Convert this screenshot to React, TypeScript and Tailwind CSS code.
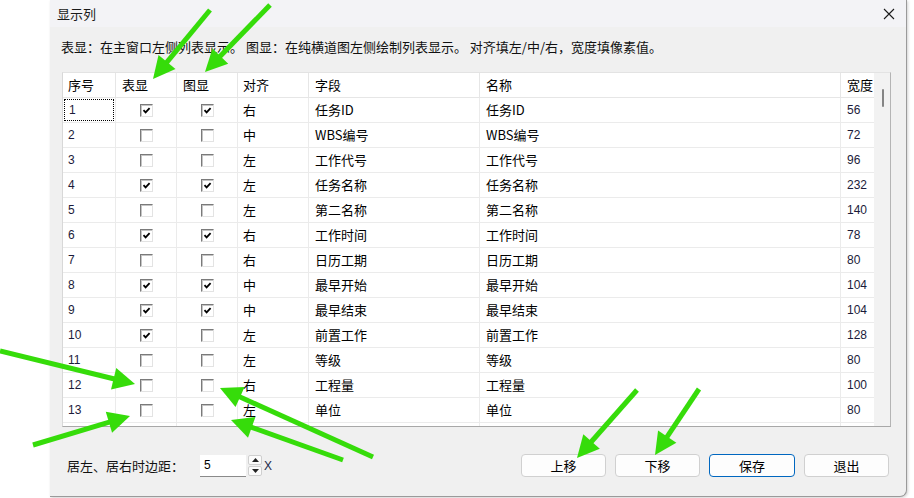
import React from "react";

type Row = [number, boolean, boolean, string, string, string, string];

const rows: Row[] = [
  [1, true, true, "右", "任务ID", "任务ID", "56"],
  [2, false, false, "中", "WBS编号", "WBS编号", "72"],
  [3, false, false, "左", "工作代号", "工作代号", "96"],
  [4, true, true, "左", "任务名称", "任务名称", "232"],
  [5, false, false, "左", "第二名称", "第二名称", "140"],
  [6, true, true, "右", "工作时间", "工作时间", "78"],
  [7, false, false, "右", "日历工期", "日历工期", "80"],
  [8, true, true, "中", "最早开始", "最早开始", "104"],
  [9, true, true, "中", "最早结束", "最早结束", "104"],
  [10, true, false, "左", "前置工作", "前置工作", "128"],
  [11, false, false, "左", "等级", "等级", "80"],
  [12, false, false, "右", "工程量", "工程量", "100"],
  [13, false, false, "左", "单位", "单位", "80"],
  [14, false, false, "中", "材料", "材料", "80"],
];

function Check({ on }: { on: boolean }) {
  return (
    <div className="w-[13px] h-[13px] bg-white border border-t-[#7a7a7a] border-l-[#7a7a7a] border-b-[#e3e3e3] border-r-[#e3e3e3] shadow-[inset_1px_1px_0_#c4c4c4] flex items-center justify-center">
      {on && (
        <svg width="11" height="11" viewBox="0 0 11 11">
          <path d="M2.5 5.2 L4.6 7.4 L8.6 3.2" stroke="#000" strokeWidth="1.8" fill="none" />
        </svg>
      )}
    </div>
  );
}

function Arrow({ x1, y1, x2, y2 }: { x1: number; y1: number; x2: number; y2: number }) {
  const dx = x2 - x1;
  const dy = y2 - y1;
  const len = Math.hypot(dx, dy);
  const ux = dx / len;
  const uy = dy / len;
  const hl = 22;
  const hw = 11;
  const bx = x2 - ux * hl;
  const by = y2 - uy * hl;
  const px = -uy;
  const py = ux;
  const pts = `${x2},${y2} ${bx + px * hw},${by + py * hw} ${bx - px * hw},${by - py * hw}`;
  return (
    <g>
      <line x1={x1} y1={y1} x2={bx + ux * 3} y2={by + uy * 3} stroke="#36dc0a" strokeWidth="5" />
      <polygon points={pts} fill="#36dc0a" />
    </g>
  );
}

const cjk = "font-['Noto_Sans_CJK_SC','Noto_Sans',sans-serif]";

export default function App() {
  return (
    <div className={`relative w-[914px] h-[498px] bg-white overflow-hidden text-black ${cjk}`}>
      <div className="ml-[50px] w-[857px] h-[497px] bg-[#f0f0f0] border-r border-b border-[#9a9a9a] rounded-br-[7px] shadow-[1px_1px_3px_rgba(0,0,0,0.18)] flex flex-col">
        {/* title bar */}
        <div className="h-[27px] bg-[#f3f3f6] flex items-center pl-[7px] pr-[9px]">
          <span className="text-[13px] leading-[20px] text-[#1a1a1a]">显示列</span>
          <div className="ml-auto w-[16px] h-[16px] flex items-center justify-center">
            <svg width="12" height="12" viewBox="0 0 12 12">
              <path d="M1 1 L11 11 M11 1 L1 11" stroke="#1a1a1a" strokeWidth="1.1" />
            </svg>
          </div>
        </div>

        {/* body */}
        <div className="px-[12px] flex flex-col">
          <div className="mt-[10px] -ml-[1px] h-[20px] text-[13px] leading-[20px] whitespace-pre text-[#111]">
            表显：在主窗口左侧列表显示。 图显：在纯横道图左侧绘制列表显示。 对齐填左/中/右，宽度填像素值。
          </div>

          {/* table */}
          <div className="mt-[15px] w-[829px] h-[355px] border border-t-[#e3e3e3] border-l-[#d8d8d8] border-r-[#b4b4b4] border-b-[#a8a8a8] bg-white flex overflow-hidden">
            <div className="w-[811px] h-full overflow-hidden">
              {/* header */}
              <div className="grid grid-cols-[53px_61px_61px_71px_171px_361px_33px] h-[25px] border-b border-[#e6e6e6] text-[13px]">
                <div className="border-r border-[#e6e6e6] pl-[5px] flex items-center">序号</div>
                <div className="border-r border-[#e6e6e6] pl-[6px] flex items-center">表显</div>
                <div className="border-r border-[#e6e6e6] pl-[6px] flex items-center">图显</div>
                <div className="border-r border-[#e6e6e6] pl-[5px] flex items-center">对齐</div>
                <div className="border-r border-[#e6e6e6] pl-[6px] flex items-center">字段</div>
                <div className="border-r border-[#e6e6e6] pl-[6px] flex items-center">名称</div>
                <div className="pl-[6px] flex items-center">宽度</div>
              </div>
              {rows.map((r) => (
                <div
                  key={r[0]}
                  className="grid grid-cols-[53px_61px_61px_71px_171px_361px_33px] h-[25px] border-b border-[#ebebeb] text-[13px]"
                >
                  <div className="border-r border-[#ebebeb] flex items-center">
                    {r[0] === 1 ? (
                      <div className="ml-[1px] w-[50px] h-[22px] border border-dotted border-black flex items-center pl-[4px] text-[12px] font-['Liberation_Sans',sans-serif] text-[#1b1b3a]">
                        {r[0]}
                      </div>
                    ) : (
                      <span className="pl-[5px] text-[12px] font-['Liberation_Sans',sans-serif] text-[#1b1b3a]">{r[0]}</span>
                    )}
                  </div>
                  <div className="border-r border-[#ebebeb] flex items-center justify-center">
                    <Check on={r[1]} />
                  </div>
                  <div className="border-r border-[#ebebeb] flex items-center justify-center">
                    <Check on={r[2]} />
                  </div>
                  <div className="border-r border-[#ebebeb] pl-[5px] flex items-center">{r[3]}</div>
                  <div className="border-r border-[#ebebeb] pl-[6px] flex items-center">{r[4]}</div>
                  <div className="border-r border-[#ebebeb] pl-[6px] flex items-center">{r[5]}</div>
                  <div className="pl-[6px] flex items-center text-[12px] font-['Liberation_Sans',sans-serif] text-[#1b1b3a]">
                    {r[6]}
                  </div>
                </div>
              ))}
            </div>
            {/* scrollbar */}
            <div className="w-[16px] h-full bg-[#f2f2f2] pt-[16px] pl-[8px]">
              <div className="w-[2px] h-[18px] bg-[#858585] rounded-full" />
            </div>
          </div>

          {/* bottom row */}
          <div className="mt-[27px] w-[827px] h-[23px] flex items-center">
            <span className="ml-[5px] text-[13px] leading-[20px] text-[#111]">居左、居右时边距：</span>
            <div className="ml-[16px] w-[46px] h-[22px] bg-white border-b border-[#8a8a8a] flex items-center pl-[4px] text-[12px] font-['Liberation_Sans',sans-serif]">
              5
            </div>
            <div className="ml-[2px] w-[14px] h-[22px] flex flex-col gap-[1px]">
              <div className="h-[10px] bg-[#fbfbfb] border border-[#cfcfcf] rounded-[2px] flex items-center justify-center">
                <svg width="7" height="4" viewBox="0 0 7 4">
                  <path d="M0 4 L3.5 0 L7 4 Z" fill="#222" />
                </svg>
              </div>
              <div className="h-[10px] bg-[#fbfbfb] border border-[#cfcfcf] rounded-[2px] flex items-center justify-center">
                <svg width="7" height="4" viewBox="0 0 7 4">
                  <path d="M0 0 L3.5 4 L7 0 Z" fill="#222" />
                </svg>
              </div>
            </div>
            <span className="ml-[2px] text-[12px] font-['Liberation_Sans',sans-serif] text-[#1b2a4a]">X</span>
            <div className="ml-auto flex gap-[9px]">
              <button className="w-[85px] h-[23px] rounded-[4px] bg-[#fdfdfd] border border-[#d0d0d0] text-[13px] leading-none">上移</button>
              <button className="w-[85px] h-[23px] rounded-[4px] bg-[#fdfdfd] border border-[#d0d0d0] text-[13px] leading-none">下移</button>
              <button className="w-[86px] h-[23px] rounded-[4px] bg-[#fdfdfd] border border-[#0067c0] text-[13px] leading-none">保存</button>
              <button className="w-[85px] h-[23px] rounded-[4px] bg-[#fdfdfd] border border-[#d0d0d0] text-[13px] leading-none">退出</button>
            </div>
          </div>
        </div>
      </div>

      {/* annotation arrows */}
      <svg className="absolute inset-0 pointer-events-none" width="914" height="498" viewBox="0 0 914 498">
        <Arrow x1={210} y1={10} x2={153} y2={79} />
        <Arrow x1={270} y1={5} x2={205} y2={72} />
        <Arrow x1={0} y1={351} x2={135} y2={384} />
        <Arrow x1={33} y1={445} x2={130} y2={416} />
        <Arrow x1={373} y1={457} x2={220} y2={388} />
        <Arrow x1={343} y1={460} x2={231} y2={420} />
        <Arrow x1={637} y1={390} x2={577} y2={458} />
        <Arrow x1={699} y1={389} x2={655} y2={455} />
      </svg>
    </div>
  );
}
